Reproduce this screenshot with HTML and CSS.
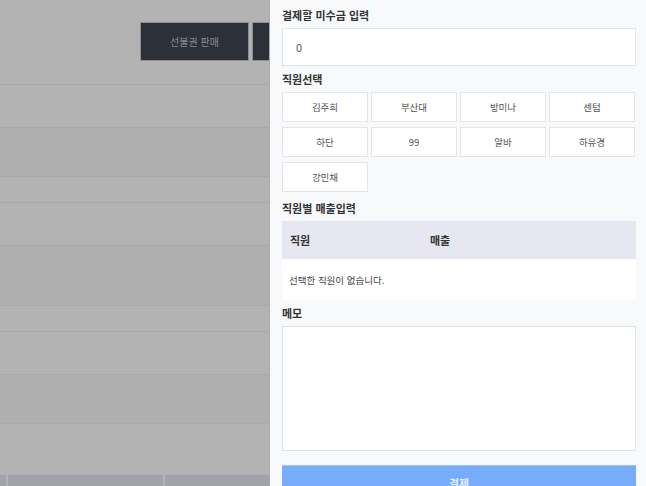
FILE: index.html
```html
<!DOCTYPE html>
<html lang="ko">
<head>
<meta charset="utf-8">
<link rel="stylesheet" href="styles.css">
</head>
<body>
<div class="page">
  <div class="bg">
    <div class="topbar">
      <div class="darkbtn">선불권 판매</div>
      <div class="darkbtn stub"></div>
    </div>
    <div class="row h43"></div>
    <div class="row h49 dim"></div>
    <div class="row h26"></div>
    <div class="row h43"></div>
    <div class="row h60 dim"></div>
    <div class="row h26"></div>
    <div class="row h43"></div>
    <div class="row h49 dim"></div>
    <div class="row h51 last"></div>
    <div class="bottombar">
      <div class="seg s1"></div>
      <div class="seg s2"></div>
      <div class="seg s3"></div>
    </div>
  </div>
  <div class="panel">
    <div class="label first">결제할 미수금 입력</div>
    <div class="input">0</div>
    <div class="label">직원선택</div>
    <div class="staff">
      <div class="sbtn">김주희</div>
      <div class="sbtn">부산대</div>
      <div class="sbtn">방미나</div>
      <div class="sbtn">센텀</div>
      <div class="sbtn">하단</div>
      <div class="sbtn">99</div>
      <div class="sbtn">알바</div>
      <div class="sbtn">하유경</div>
      <div class="sbtn">강민채</div>
    </div>
    <div class="label l3">직원별 매출입력</div>
    <div class="table">
      <div class="thead">
        <div class="c1">직원</div>
        <div class="c2">매출</div>
      </div>
      <div class="tbody">선택한 직원이 없습니다.</div>
    </div>
    <div class="label">메모</div>
    <div class="memo"></div>
    <div class="pay">결제</div>
  </div>
</div>
</body>
</html>
```
FILE: styles.css
```css
html, body {
  margin: 0;
  padding: 0;
}
body {
  width: 646px;
  height: 486px;
  overflow: hidden;
  font-family: "Noto Sans CJK KR", "Noto Sans", sans-serif;
}
.page {
  display: flex;
  width: 646px;
  height: 486px;
  overflow: hidden;
}
.bg {
  width: 270px;
  flex: none;
  background: #b3b3b3;
  display: flex;
  flex-direction: column;
  border-right: 1px solid #a9abac;
  box-sizing: border-box;
}
.topbar {
  height: 85px;
  box-sizing: border-box;
  padding-top: 22px;
  display: flex;
  justify-content: flex-end;
  gap: 3px;
  border-bottom: 1px solid #a7aaab;
  overflow: hidden;
}
.darkbtn {
  width: 109px;
  height: 39px;
  box-sizing: border-box;
  background: #2c3038;
  border: 1px solid #8e9194;
  color: #8a8c91;
  font-size: 10px;
  display: flex;
  align-items: center;
  justify-content: center;
  flex: none;
}
.darkbtn.stub {
  width: 17px;
  border-right: none;
}
.row {
  box-sizing: border-box;
  border-bottom: 1px solid #a7aaab;
  flex: none;
}
.row.dim { background: #afafaf; }
.h43 { height: 43px; }
.h49 { height: 49px; }
.h26 { height: 26px; }
.h60 { height: 60px; }
.h51 { height: 51px; }
.row.last { border-bottom: 1px solid #adb0b1; }
.bottombar {
  flex: 1;
  display: flex;
  gap: 2px;
  background: #b1b3b4;
}
.seg { background: #a1a3a8; }
.s1 { width: 6px; }
.s2 { width: 155px; }
.s3 { flex: 1; }

.panel {
  flex: 1;
  background: #f8f9fb;
  padding: 0 10px 0 12px;
  display: flex;
  flex-direction: column;
}
.label {
  height: 26px;
  line-height: 27px;
  font-size: 11px;
  font-weight: 700;
  color: #333;
  flex: none;
}
.label.first {
  height: 28px;
  line-height: 30px;
}
.label.l3 {
  height: 29px;
  line-height: 32px;
}
.input {
  height: 38px;
  box-sizing: border-box;
  background: #fff;
  border: 1px solid #dde6ea;
  padding-left: 13px;
  font-size: 11px;
  color: #555;
  display: flex;
  align-items: center;
  flex: none;
}
.staff {
  display: grid;
  grid-template-columns: repeat(4, 86px);
  grid-auto-rows: 30px;
  column-gap: 3px;
  row-gap: 5px;
  flex: none;
}
.sbtn {
  background: #fff;
  border: 1px solid #e3e5e8;
  box-sizing: border-box;
  font-size: 9.5px;
  color: #555;
  display: flex;
  align-items: center;
  justify-content: center;
}
.table { flex: none; }
.thead {
  height: 38px;
  background: #e6e7f0;
  display: flex;
  align-items: center;
  font-size: 11px;
  font-weight: 700;
  color: #333;
}
.c1 { width: 148px; padding-left: 8px; box-sizing: border-box; }
.c2 { flex: 1; }
.tbody {
  height: 41px;
  background: #fff;
  padding-left: 7px;
  font-size: 9.5px;
  color: #444;
  display: flex;
  align-items: center;
}
.memo {
  height: 125px;
  box-sizing: border-box;
  background: #fff;
  border: 1px solid #dce4e8;
  flex: none;
}
.pay {
  margin-top: 14px;
  height: 38px;
  box-sizing: border-box;
  padding-top: 9px;
  line-height: 16px;
  text-align: center;
  background: #76acfa;
  border-top: 1px solid #9ec4fb;
  color: #e4eeff;
  font-size: 11px;
  font-weight: 700;
  flex: none;
}
```
